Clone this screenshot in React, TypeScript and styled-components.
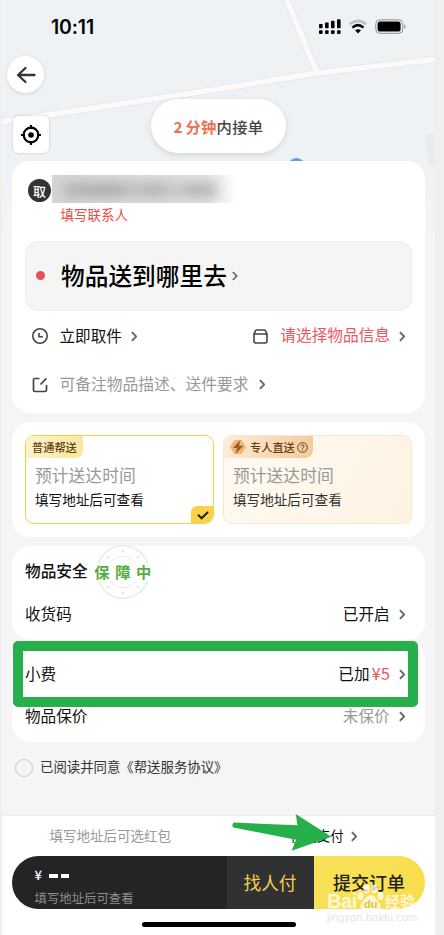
import React from "react";
import styled, { createGlobalStyle } from "styled-components";

const Global = createGlobalStyle`
  * { box-sizing: border-box; }
  body {
    margin: 0;
    background: #efefef;
    font-family: "Noto Sans CJK SC", sans-serif;
    color: #111;
  }
`;

const Phone = styled.div`
  position: relative;
  display: flex;
  flex-direction: column;
  width: 433px;
  height: 935px;
  margin-left: 2px;
  background: linear-gradient(#eef2f5 0, #eef2f5 160px, #f5f5f5 250px);
  overflow: hidden;
`;

const MapLayer = styled.svg`
  position: absolute;
  left: 0;
  top: 0;
`;

const Header = styled.header`
  position: relative;
  display: flex;
  flex-direction: column;
  height: 161px;
  flex: none;
`;

const StatusBar = styled.div`
  display: flex;
  align-items: center;
  justify-content: space-between;
  height: 53px;
  margin-bottom: 2px;
  padding: 0 29px 0 49px;
`;

const Clock = styled.span`
  font: 600 19.4px/24px Inter, sans-serif;
  letter-spacing: -0.1px;
  color: #050505;
`;

const HeaderControls = styled.div`
  display: grid;
  grid-template-columns: 144px 1fr;
  padding-left: 5px;
`;

const SideButtons = styled.div`
  display: flex;
  flex-direction: column;
  gap: 23px;
`;

const BackButton = styled.button`
  display: flex;
  align-items: center;
  justify-content: center;
  width: 37px;
  height: 37px;
  margin-top: 1px;
  padding: 0;
  border: 0;
  border-radius: 50%;
  background: #fff;
  box-shadow: 0 1px 4px rgba(0, 0, 0, 0.12);
`;

const LocateButton = styled.button`
  display: flex;
  align-items: center;
  justify-content: center;
  width: 36px;
  height: 37px;
  margin-left: 6px;
  padding: 0;
  border: 0;
  border-radius: 5px;
  background: #fff;
  box-shadow: 0 0 2px rgba(0, 0, 0, 0.25);
`;

const Eta = styled.div`
  display: flex;
  align-items: center;
  justify-content: center;
  width: 135px;
  height: 54px;
  margin-top: 44px;
  padding-bottom: 1px;
  border-radius: 27px;
  background: #fff;
  box-shadow: 0 2px 6px rgba(0, 0, 0, 0.12);
  font-size: 15.3px;
  font-weight: 500;
  letter-spacing: 0.3px;
  color: #444;
  em {
    font-style: normal;
    font-weight: 700;
    color: #ec6f56;
  }
`;

const EtaNumber = styled.em`
  margin-right: 2.5px;
`;

const Card = styled.section<{ $h: number; $gap?: number }>`
  position: relative;
  flex: none;
  width: 413px;
  height: ${(p) => p.$h}px;
  margin: ${(p) => p.$gap ?? 0}px 0 0 10px;
  padding: 0 13px;
  border-radius: 18px;
  background: #fff;
`;

const Pickup = styled.div`
  display: grid;
  grid-template-columns: 23px 1fr;
  column-gap: 1px;
  height: 80px;
  padding: 14px 0 0 3px;
  align-content: start;
`;

const PickBadge = styled.span`
  display: flex;
  align-items: center;
  justify-content: center;
  width: 23px;
  height: 23px;
  margin-top: 4px;
  padding-bottom: 1px;
  border-radius: 50%;
  background: #333;
  color: #fff;
  font-size: 13px;
  font-weight: 500;
`;

const HiddenAddress = styled.div`
  width: 181px;
  height: 28px;
  background: linear-gradient(90deg, #d4d4d4 0, #dcdcdc 60%, #e2e2e2 85%, #fafafa 100%);
  overflow: hidden;
`;

const Smudge = styled.div`
  height: 12px;
  margin: 9px 16px 0 12px;
  background: linear-gradient(90deg, #aeaeae, #a6a6a6 35%, #bebebe 45%, #acacac 60%, #c6c6c6 73%, #adadad 85%, #b2b2b2);
  filter: blur(6px);
`;

const Contact = styled.span`
  grid-column: 2;
  margin: 1px 0 0 8.5px;
  font-size: 13.5px;
  line-height: 20px;
  color: #e84e40;
`;

const Destination = styled.div`
  display: flex;
  align-items: center;
  height: 69.5px;
  padding-left: 9.5px;
  border: 1px solid #ececec;
  border-radius: 13px;
  background: #f5f5f5;
  strong {
    margin: 0 5px 0 16.5px;
    padding-bottom: 2px;
    font-size: 23.7px;
    font-weight: 500;
    line-height: 36px;
    color: #000;
  }
`;

const Dot = styled.i`
  width: 9px;
  height: 9px;
  border-radius: 50%;
  background: #ea4e57;
`;

const Row = styled.div<{ $h: number; $pad?: string }>`
  display: flex;
  align-items: center;
  height: ${(p) => p.$h}px;
  padding: ${(p) => p.$pad ?? "0 6px 0 0"};
`;

const Spacer = styled.span`
  flex: 1;
`;

const Label = styled.span<{ $tone?: string; $w?: number; $size?: number; $m?: string }>`
  margin: ${(p) => p.$m ?? "0"};
  padding-bottom: 2px;
  font-size: ${(p) => p.$size ?? 15.6}px;
  font-weight: ${(p) => p.$w ?? 400};
  line-height: 22px;
  white-space: nowrap;
  color: ${(p) => p.$tone ?? "#111"};
`;

const Options = styled.div`
  display: grid;
  grid-template-columns: 189px 189px;
  gap: 9px;
  padding-top: 13px;
`;

const Option = styled.div<{ $selected?: boolean }>`
  position: relative;
  display: flex;
  flex-direction: column;
  align-items: flex-start;
  height: 89px;
  border: 1px solid ${(p) => (p.$selected ? "#f7cf45" : "#fae7d0")};
  border-radius: 9px;
  background: ${(p) => (p.$selected ? "#fff" : "linear-gradient(120deg, #fffaf2, #fdf3e3)")};
  overflow: hidden;
`;

const Tag = styled.div<{ $selected?: boolean }>`
  display: flex;
  align-items: center;
  width: ${(p) => (p.$selected ? 57 : 89)}px;
  height: 22px;
  padding-left: 6px;
  border-radius: 0 0 8px 0;
  background: ${(p) =>
    p.$selected ? "linear-gradient(110deg, #fdf4cf, #fbe59a)" : "linear-gradient(110deg, #fdeedb, #f5c998)"};
  font-size: 11.2px;
  font-weight: 500;
  line-height: 22px;
  color: ${(p) => (p.$selected ? "#5c4310" : "#66401a")};
  svg { flex: none; }
  span { margin: 0 2px 0 4px; }
`;

const OptionText = styled.div`
  display: flex;
  flex-direction: column;
  padding: 6px 0 0 9px;
`;

const Corner = styled.span`
  position: absolute;
  right: -1px;
  bottom: -1px;
  display: flex;
  align-items: center;
  justify-content: center;
  width: 23px;
  height: 18px;
  border-radius: 6px 0 0 0;
  background: #f9d247;
`;

const Guarantee = styled.span`
  position: relative;
  margin-left: 6.5px;
  padding-bottom: 2px;
  font-size: 15.3px;
  font-weight: 700;
  line-height: 22px;
  letter-spacing: 5.6px;
  color: #55ae3e;
`;

const Stamp = styled.svg`
  position: absolute;
  left: 2px;
  top: -15px;
`;

const GuaranteeText = styled.span`
  position: relative;
`;

const Highlight = styled.div`
  position: absolute;
  left: 1px;
  top: 0;
  width: 405px;
  height: 66px;
  border: 10px solid #25b04c;
  border-radius: 5px;
`;

const Agreement = styled.div`
  display: flex;
  align-items: center;
  flex: none;
  height: 73px;
  padding: 0 0 23px 13px;
`;

const Radio = styled.i`
  width: 18px;
  height: 18px;
  margin: 2px 7px 0 0;
  border: 1px solid #c8c8c8;
  border-radius: 50%;
`;

const Footer = styled.footer`
  position: relative;
  flex: none;
  height: 120px;
  padding: 0 10px;
  border-top: 1px solid #ececec;
  background: #fff;
`;

const PayBar = styled.div`
  display: grid;
  grid-template-columns: 215px 87px 111px;
  height: 53px;
  border-radius: 27px;
  overflow: hidden;
`;

const Price = styled.div`
  display: flex;
  flex-direction: column;
  padding: 9px 0 0 22.5px;
  background: #232426;
`;

const Amount = styled.div`
  display: flex;
  align-items: center;
  gap: 3px;
  height: 20px;
  margin-bottom: 1.5px;
  font: 500 13px/20px "Noto Sans CJK SC", sans-serif;
  color: #fff;
  span { width: 11.5px; }
  i {
    width: 8.5px;
    height: 4px;
    margin-top: 2px;
    background: #fff;
  }
`;

const PayButton = styled.button<{ $primary?: boolean }>`
  padding: 0 1px 2px 0;
  border: 0;
  background: ${(p) => (p.$primary ? "linear-gradient(120deg, #f8e25a, #f9dc4b)" : "#303133")};
  font: ${(p) => (p.$primary ? 500 : 400)} ${(p) => (p.$primary ? 18 : 17.7)}px/26px "Noto Sans CJK SC", sans-serif;
  color: ${(p) => (p.$primary ? "#222" : "#f5cf4a")};
`;

const HomeIndicator = styled.div`
  width: 154px;
  height: 5px;
  margin: 13px 0 0 130px;
  border-radius: 3px;
  background: #000;
`;

const Arrow = styled.svg`
  position: absolute;
  left: 228px;
  top: -5px;
`;

const Watermark = styled.div`
  position: absolute;
  left: 325px;
  top: 62px;
  width: 94px;
  color: rgba(255, 255, 255, 0.78);
  white-space: nowrap;
`;

const WatermarkBrand = styled.div`
  display: flex;
  align-items: flex-end;
  height: 34px;
  b {
    width: 30px;
    font: 700 20px/22px "Liberation Sans", sans-serif;
    letter-spacing: -0.4px;
  }
  span {
    margin-left: 1px;
    font-size: 15px;
    font-weight: 700;
    line-height: 22px;
  }
`;

const WatermarkUrl = styled.div`
  margin-top: -1px;
  font: 400 11px/12px "Liberation Sans", sans-serif;
  letter-spacing: 0.1px;
  color: #e6e6e6;
`;

const Chevron = ({ size = 12, tone = "#666" }: { size?: number; tone?: string }) => (
  <svg width={size * 0.58} height={size} viewBox="0 0 7 12" fill="none" stroke={tone} strokeWidth="2">
    <path d="M1 1.2 5.7 6 1 10.8" />
  </svg>
);

const StatusIcons = () => (
  <svg width="88" height="18" viewBox="318 18 88 18">
    {[319, 325, 331, 337].map((x, i) => (
      <g key={x}>
        <rect x={x} y={24 - i * 1.6} width="3.6" height={4.2 + i * 1.6} rx="0.8" />
        <rect x={x} y="30.2" width="3.6" height="3.8" rx="1" />
      </g>
    ))}
    <path d="M349.6 24.3Q358 17.5 366.3 24.3" fill="none" stroke="#bcc0c3" strokeWidth="2.6" />
    <path d="M352.4 27.6Q358 22.7 363.5 27.6" fill="none" stroke="#000" strokeWidth="2.5" />
    <path d="M355 30.3Q358 28 361 30.3L358 33.4Z" />
    <rect x="375.8" y="19.8" width="27" height="13.5" rx="4" fill="none" stroke="#8f9294" />
    <rect x="377.6" y="21.6" width="23" height="10" rx="2.6" />
    <path d="M404.3 24.3Q407 26.5 404.3 29Z" fill="#8f9294" />
  </svg>
);

export default function App() {
  return (
    <>
      <Global />
      <Phone>
        <MapLayer width="433" height="200" viewBox="2 0 433 200">
          <path d="M425 134 440 132V166H429Z" fill="#e8ebee" />
          <g fill="none">
            <path d="M286-2 317 73" stroke="#e8e5e0" strokeWidth="7" />
            <path d="M-2 122.5 140 101 222 88.5 317 73 440 59" stroke="#e8e5e0" strokeWidth="7" />
            <path d="M286-2 317 73" stroke="#fafafa" strokeWidth="5.5" />
            <path d="M-2 122.5 140 101 222 88.5 317 73 440 59" stroke="#fafafa" strokeWidth="5.5" />
          </g>
          <circle cx="296.5" cy="167" r="9" fill="#5c9bf0" />
        </MapLayer>
        <Header>
          <StatusBar>
            <Clock>10:11</Clock>
            <StatusIcons />
          </StatusBar>
          <HeaderControls>
            <SideButtons>
              <BackButton aria-label="返回">
                <svg width="20" height="18" viewBox="0 0 20 18" fill="none" stroke="#333" strokeWidth="2.3" strokeLinecap="round" strokeLinejoin="round">
                  <path d="M9.5 2 2 9l7.5 7M2.5 9H18.5" />
                </svg>
              </BackButton>
              <LocateButton aria-label="定位">
                <svg width="20" height="20" viewBox="0 0 20 20" fill="none" stroke="#000" strokeWidth="2.2">
                  <circle cx="10" cy="10" r="7.3" />
                  <path d="M10 0v4M10 16v4M0 10h4M16 10h4" />
                  <circle cx="10" cy="10" r="2.8" fill="#000" stroke="none" />
                </svg>
              </LocateButton>
            </SideButtons>
            <Eta>
              <EtaNumber>2</EtaNumber>
              <em>分钟</em>内接单
            </Eta>
          </HeaderControls>
        </Header>

        <Card $h={252}>
          <Pickup>
            <PickBadge>取</PickBadge>
            <HiddenAddress><Smudge /></HiddenAddress>
            <Contact>填写联系人</Contact>
          </Pickup>
          <Destination>
            <Dot />
            <strong>物品送到哪里去</strong>
            <Chevron size={10} />
          </Destination>
          <Row $h={50} $pad="1px 7px 0 7px">
            <svg width="16" height="16" viewBox="0 0 16 16" fill="none" stroke="#444" strokeWidth="1.6">
              <circle cx="8" cy="8" r="7.2" />
              <path d="M7 5v3.7h3.8" />
            </svg>
            <Label $m="0 9px 0 11.5px">立即取件</Label>
            <Chevron size={11} />
            <Spacer />
            <svg width="15" height="15" viewBox="0 0 15 15" fill="none" stroke="#444" strokeWidth="1.6">
              <path d="M1 4.8 2.6 1.6Q3 1 3.8 1h7.4q.8 0 1.2.6L14 4.8V12a2 2 0 0 1-2 2H3a2 2 0 0 1-2-2ZM1 5h13" strokeLinejoin="round" />
            </svg>
            <Label $tone="#ee5560" $m="0 8.5px 0 12.5px" $size={15.7}>请选择物品信息</Label>
            <Chevron size={11} />
          </Row>
          <Row $h={48} $pad="0 7px 0 7px">
            <svg width="16" height="16" viewBox="0 0 16 16" fill="none" stroke="#444" strokeWidth="1.7">
              <path d="M7.5 1.5H3a1.5 1.5 0 0 0-1.5 1.5v10A1.5 1.5 0 0 0 3 14.5h10a1.5 1.5 0 0 0 1.5-1.5V8M8.5 7.5 14.3 1.3" />
            </svg>
            <Label $tone="#999" $m="0 10px 0 11.5px" $size={15.75}>可备注物品描述、送件要求</Label>
            <Chevron size={11} />
          </Row>
        </Card>

        <Card $h={115} $gap={9}>
          <Options>
            <Option $selected>
              <Tag $selected>普通帮送</Tag>
              <OptionText>
                <Label $tone="#999" $size={16.8}>预计送达时间</Label>
                <Label $size={13.6}>填写地址后可查看</Label>
              </OptionText>
              <Corner>
                <svg width="12" height="9" viewBox="0 0 12 9" fill="none" stroke="#222" strokeWidth="2">
                  <path d="m1 3.8 3.6 3.5L11 1" />
                </svg>
              </Corner>
            </Option>
            <Option>
              <Tag>
                <svg width="16" height="16" viewBox="0 0 16 16">
                  <path d="M4.4 1h7.2L16 8l-4.4 7H4.4L0 8Z" fill="#edb77c" />
                  <path d="M10.5 1 2.8 9H7l-1.6 6 8-8.3H9Z" fill="#a05c1c" />
                </svg>
                <span>专人直送</span>
                <svg width="11" height="11" viewBox="0 0 11 11" fill="none" stroke="#66401a">
                  <circle cx="5.5" cy="5.5" r="4.8" />
                  <path d="M4 4.4a1.5 1.5 0 1 1 2.2 1.3q-.7.4-.7 1M5.5 7.3v1.1" />
                </svg>
              </Tag>
              <OptionText>
                <Label $tone="#999" $size={16.8}>预计送达时间</Label>
                <Label $tone="#333" $size={13.6}>填写地址后可查看</Label>
              </OptionText>
            </Option>
          </Options>
        </Card>

        <Card $h={94} $gap={9}>
          <Row $h={52}>
            <Label $w={500} $size={15.7}>物品安全</Label>
            <Guarantee>
              <Stamp width="54" height="54" viewBox="-27 -27 54 54" fill="none" stroke="#e3f3df">
                <path d="M-24.5-9A26 26 0 0 1 24.5-9M-24.5 9A26 26 0 0 0 24.5 9" strokeWidth="1.8" />
                <path d="M-13-9A16 16 0 0 1 13-9M-13 9A16 16 0 0 0 13 9" />
                <g fill="#dcf0d7" stroke="none">
                  <circle cy="-21" r="1.5" /><circle cy="21" r="1.5" />
                  <circle cx="-15" cy="-15" r="1.5" /><circle cx="15" cy="-15" r="1.5" />
                  <circle cx="-15" cy="15" r="1.5" /><circle cx="15" cy="15" r="1.5" />
                </g>
              </Stamp>
              <GuaranteeText>保障中</GuaranteeText>
            </Guarantee>
          </Row>
          <Row $h={32} $pad="0 7px 0 0">
            <Label>收货码</Label>
            <Spacer />
            <Label $m="0 9px 0 0">已开启</Label>
            <Chevron size={11} />
          </Row>
        </Card>

        <Card $h={101} $gap={1}>
          <Row $h={66} $pad="0 7px 0 0">
            <Label>小费</Label>
            <Spacer />
            <Label $m="0 2px 0 0">已加</Label>
            <Label $tone="#ee5560" $m="0 8.5px 0 0" $size={16.8}>¥5</Label>
            <Chevron size={11} />
          </Row>
          <Row $h={18} $pad="0 7px 0 0">
            <Label>物品保价</Label>
            <Spacer />
            <Label $tone="#999" $m="0 9px 0 0">未保价</Label>
            <Chevron size={11} />
          </Row>
          <Highlight />
        </Card>

        <Agreement>
          <Radio />
          <Label $tone="#333" $size={13.4}>已阅读并同意《帮送服务协议》</Label>
        </Agreement>

        <Footer>
          <Row $h={40} $pad="0 68px 0 37.5px">
            <Label $tone="#999" $size={13.5}>填写地址后可选红包</Label>
            <Spacer />
            <Label $size={13.4} $m="0 7px 0 0">在线支付</Label>
            <Chevron size={11} />
          </Row>
          <PayBar>
            <Price>
              <Amount><span>¥</span><i /><i /></Amount>
              <Label $tone="#8c8c8c" $size={12.4}>填写地址后可查看</Label>
            </Price>
            <PayButton>找人付</PayButton>
            <PayButton $primary>提交订单</PayButton>
          </PayBar>
          <HomeIndicator />
          <Arrow width="106" height="44" viewBox="230 811 106 44">
            <path d="M234 822.5 297.5 825.3 295.7 814 331.4 836.8 291.7 850.7 296 839.7 233.5 827.5Q231 825 234 822.5Z" fill="#25b04c" />
          </Arrow>
          <Watermark>
            <WatermarkBrand>
              <b>Bai</b>
              <svg width="27" height="28" viewBox="0 0 27 28" fill="currentColor">
                <ellipse cx="3.5" cy="12" rx="3" ry="4" />
                <ellipse cx="9.5" cy="5" rx="3" ry="4.4" />
                <ellipse cx="17.5" cy="5" rx="3" ry="4.4" />
                <ellipse cx="23.5" cy="12" rx="3" ry="4" />
                <path d="M13.5 11c4 0 5 4 8 7 4 4 2 9-2 9-2 0-4-.6-6-.6s-4 .6-6 .6c-4 0-6-5-2-9 3-3 4-7 8-7Z" />
                <text x="7" y="24" fontFamily="Liberation Sans" fontSize="11" fontWeight="700" fill="#e3c440">du</text>
              </svg>
              <span>经验</span>
            </WatermarkBrand>
            <WatermarkUrl>jingyan.baidu.com</WatermarkUrl>
          </Watermark>
        </Footer>
      </Phone>
    </>
  );
}
